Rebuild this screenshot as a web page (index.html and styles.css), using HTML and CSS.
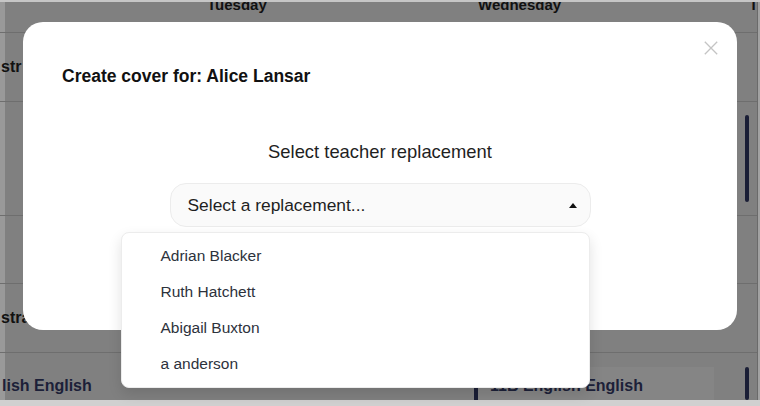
FILE: index.html
```html
<!DOCTYPE html>
<html lang="en">
<head>
<meta charset="utf-8">
<title>Create cover</title>
<link rel="stylesheet" href="styles.css">
</head>
<body>
<div class="screen">
  <div class="timetable">
    <div class="row row-head">
      <div class="cell cell-mon"></div>
      <div class="cell"><span class="day">Tuesday</span></div>
      <div class="cell"><span class="day">Wednesday</span></div>
      <div class="cell"><span class="day">Thursday</span></div>
    </div>
    <div class="row row-1">
      <div class="cell cell-mon"><span class="cut-text">str</span></div>
      <div class="cell"></div>
      <div class="cell"></div>
      <div class="cell"></div>
    </div>
    <div class="row row-2">
      <div class="cell cell-mon"></div>
      <div class="cell"></div>
      <div class="cell"></div>
      <div class="cell"><div class="lesson lesson-tall"><span class="lesson-bar"></span></div></div>
    </div>
    <div class="row row-3">
      <div class="cell cell-mon"></div>
      <div class="cell"></div>
      <div class="cell"></div>
      <div class="cell"></div>
    </div>
    <div class="row row-4">
      <div class="cell cell-mon"><span class="cut-text">strat</span></div>
      <div class="cell"></div>
      <div class="cell"></div>
      <div class="cell"></div>
    </div>
    <div class="row row-5">
      <div class="cell cell-mon"><div class="lesson lesson-cut"><span class="lesson-name">lish English</span></div></div>
      <div class="cell"></div>
      <div class="cell"><div class="lesson lesson-card"><span class="lesson-bar"></span><span class="lesson-name">11B English English</span></div></div>
      <div class="cell"><div class="lesson"><span class="lesson-bar"></span></div></div>
    </div>
  </div>
  <div class="hscroll"></div>

  <div class="overlay">
    <div class="modal">
      <h2 class="modal-title">Create cover for: Alice Lansar</h2>
      <button class="modal-close" type="button" aria-label="Close">
        <svg width="14" height="14" viewBox="0 0 14 14"><path d="M0.8 0.8 L13.2 13.2 M13.2 0.8 L0.8 13.2" stroke="#c4c4c4" stroke-width="1.3" fill="none"/></svg>
      </button>
      <div class="picker">
        <div class="picker-label">Select teacher replacement</div>
        <div class="select-wrap">
          <div class="select-box">
            <span class="select-text">Select a replacement...</span>
            <span class="select-caret"></span>
          </div>
          <ul class="menu">
            <li class="menu-item">Adrian Blacker</li>
            <li class="menu-item">Ruth Hatchett</li>
            <li class="menu-item">Abigail Buxton</li>
            <li class="menu-item">a anderson</li>
          </ul>
        </div>
      </div>
    </div>
  </div>
</div>
</body>
</html>
```

FILE: styles.css
```css
* { box-sizing: border-box; }
html, body { margin: 0; padding: 0; }
body {
  width: 760px;
  height: 406px;
  overflow: hidden;
  font-family: "Liberation Sans", Arial, sans-serif;
  background: #d0d0d0;
}

.screen {
  position: relative;
  width: 760px;
  height: 406px;
  overflow: hidden;
  border-top: 2px solid #c6c6c6;
  background: linear-gradient(90deg, #999999 0 5px, #808080 5px 757px, #6a6a6a 757px 758px, #a2a2a2 758px);
  display: flex;
  flex-direction: column;
}

.timetable {
  width: 757px;
  display: flex;
  flex-direction: column;
}

.row {
  display: grid;
  grid-template-columns: 194px 271px 271px 21px;
  border-bottom: 1px solid #6e6e6e;
  overflow: hidden;
}
.row-head { height: 31px; }
.row-1 { height: 69px; }
.row-2 { height: 114px; }
.row-3 { height: 68px; }
.row-4 { height: 69px; }
.row-5 { height: 47px; border-bottom: 0; }

.cell {
  min-width: 0;
  overflow: hidden;
  display: flex;
  align-items: center;
}
.row-head .cell { align-items: flex-start; }
.row-5 .cell { align-items: flex-start; }

.day {
  display: block;
  padding-left: 13px;
  font-size: 15px;
  line-height: 5px;
  font-weight: 700;
  color: #111111;
  white-space: nowrap;
}

.cut-text {
  padding-left: 1px;
  font-size: 16px;
  font-weight: 700;
  color: #111111;
  white-space: nowrap;
}

.lesson {
  display: flex;
  align-items: flex-start;
  margin-left: 9px;
  height: 33px;
  margin-top: 14px;
}
.lesson-tall {
  height: 87px;
  margin-top: 0;
}
.row-2 .cell:last-child { align-items: center; }
.lesson-cut { margin-left: 2px; }
.lesson-card {
  width: 240px;
  height: 36px;
  background: #858585;
}
.lesson-bar {
  width: 4px;
  align-self: stretch;
  border-radius: 2px;
  background: #1a1e36;
}
.lesson-name {
  padding-left: 12px;
  padding-top: 9px;
  font-size: 16px;
  line-height: 20px;
  font-weight: 700;
  color: #1c2038;
  white-space: nowrap;
}
.lesson-cut .lesson-name { padding-left: 0; }

.hscroll {
  flex: 1;
  background: #d0d0d0;
}

/* modal */
.overlay {
  position: absolute;
  inset: 0;
  display: flex;
  justify-content: center;
  align-items: flex-start;
  padding-top: 20px;
}

.modal {
  position: relative;
  width: 714px;
  height: 308px;
  background: #ffffff;
  border-radius: 20px;
  padding: 44px 39px 0;
}

.modal-title {
  margin: 0;
  font-size: 17.5px;
  line-height: 20px;
  font-weight: 700;
  color: #111111;
}

.modal-close {
  position: absolute;
  top: 19px;
  right: 19px;
  width: 14px;
  height: 14px;
  padding: 0;
  border: 0;
  background: none;
  display: block;
}
.modal-close svg { display: block; }

.picker {
  margin-top: 55px;
  display: flex;
  flex-direction: column;
  align-items: center;
}

.picker-label {
  font-size: 18.4px;
  line-height: 21px;
  color: #1f1f1f;
}

.select-wrap {
  position: relative;
  margin-top: 21px;
  width: 421px;
}

.select-box {
  height: 44px;
  border: 1px solid #ececec;
  border-radius: 16px;
  background: #fafafa;
  display: flex;
  align-items: center;
  justify-content: space-between;
  padding: 0 13px 0 17px;
}

.select-text {
  font-size: 17.4px;
  color: #1f1f1f;
}

.select-caret {
  width: 0;
  height: 0;
  border-left: 4.5px solid transparent;
  border-right: 4.5px solid transparent;
  border-bottom: 5px solid #111111;
}

.menu {
  position: absolute;
  top: 49px;
  right: 1px;
  width: 469px;
  margin: 0;
  padding: 5px 0;
  list-style: none;
  background: #ffffff;
  border: 1px solid #ececec;
  border-radius: 8px;
  box-shadow: 0 6px 14px rgba(0, 0, 0, 0.12);
}

.menu-item {
  height: 36px;
  line-height: 36px;
  padding-left: 39px;
  font-size: 15.5px;
  color: #2d323c;
}
```
